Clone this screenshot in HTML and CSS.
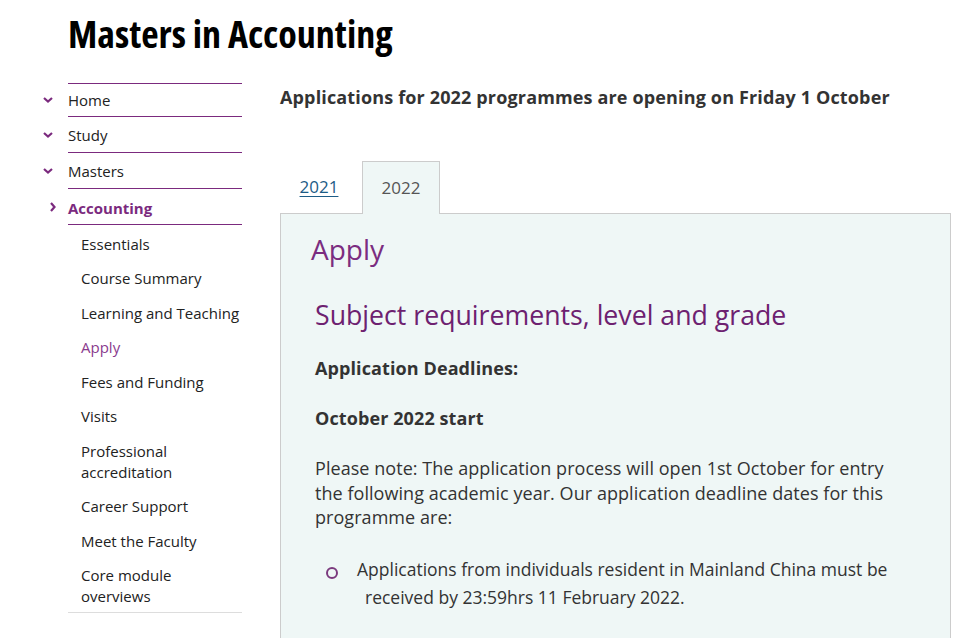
FILE: index.html
```html
<!DOCTYPE html>
<html lang="en">
<head>
<meta charset="utf-8">
<title>Masters in Accounting</title>
<link rel="stylesheet" href="styles.css">
</head>
<body>
<header class="page-head">
  <h1 class="page-title">Masters in Accounting</h1>
</header>
<div class="layout">
  <nav class="sidenav">
    <ul class="crumbs">
      <li class="crumb"><span class="chev chev-down"><svg viewBox="0 0 10 6" width="10" height="6"><path d="M1 1 L5 4.5 L9 1" fill="none" stroke="currentColor" stroke-width="2.2"/></svg></span><a class="crumb-link" href="#">Home</a></li>
      <li class="crumb"><span class="chev chev-down"><svg viewBox="0 0 10 6" width="10" height="6"><path d="M1 1 L5 4.5 L9 1" fill="none" stroke="currentColor" stroke-width="2.2"/></svg></span><a class="crumb-link" href="#">Study</a></li>
      <li class="crumb"><span class="chev chev-down"><svg viewBox="0 0 10 6" width="10" height="6"><path d="M1 1 L5 4.5 L9 1" fill="none" stroke="currentColor" stroke-width="2.2"/></svg></span><a class="crumb-link" href="#">Masters</a></li>
      <li class="crumb crumb-current"><span class="chev chev-right"><svg viewBox="0 0 6 10" width="6" height="10"><path d="M1 1 L4.5 5 L1 9" fill="none" stroke="currentColor" stroke-width="2.2"/></svg></span><a class="crumb-link" href="#">Accounting</a></li>
    </ul>
    <ul class="subnav">
      <li><a class="sub-link" href="#">Essentials</a></li>
      <li><a class="sub-link" href="#">Course Summary</a></li>
      <li><a class="sub-link" href="#">Learning and Teaching</a></li>
      <li><a class="sub-link sub-active" href="#">Apply</a></li>
      <li><a class="sub-link" href="#">Fees and Funding</a></li>
      <li><a class="sub-link" href="#">Visits</a></li>
      <li><a class="sub-link" href="#">Professional accreditation</a></li>
      <li><a class="sub-link" href="#">Career Support</a></li>
      <li><a class="sub-link" href="#">Meet the Faculty</a></li>
      <li><a class="sub-link sub-last" href="#">Core module overviews</a></li>
    </ul>
  </nav>
  <main class="main">
    <p class="notice">Applications for 2022 programmes are opening on Friday 1 October</p>
    <div class="tabs">
      <a class="tab" href="#">2021</a>
      <span class="tab tab-active">2022</span>
    </div>
    <section class="panel">
      <h2 class="panel-title">Apply</h2>
      <div class="panel-body">
        <h3 class="sub-title">Subject requirements, level and grade</h3>
        <p class="strong-line">Application Deadlines:</p>
        <p class="strong-line">October 2022 start</p>
        <p class="para">Please note: The application process will open 1st October for entry the following academic year. Our application deadline dates for this programme are:</p>
        <ul class="bullets">
          <li class="bullet">Applications from individuals resident in Mainland China must be received by 23:59hrs 11 February 2022.</li>
        </ul>
      </div>
    </section>
  </main>
</div>
</body>
</html>
```
FILE: styles.css
```css
* { box-sizing: border-box; }
html, body { margin: 0; padding: 0; background: #fff; }
body {
  font-family: "Open Sans", "DejaVu Sans", sans-serif;
  color: #333;
  width: 965px;
  height: 638px;
  overflow: hidden;
}
a { text-decoration: none; color: inherit; }
ul { list-style: none; margin: 0; padding: 0; }

.page-head { padding: 11px 0 0 68px; height: 83px; }
.page-title {
  margin: 0;
  font-size: 38px;
  line-height: 44px;
  font-weight: 700;
  font-stretch: 75%;
  color: #000;
}

.layout { display: flex; }
.sidenav { width: 242px; padding-left: 40px; flex: none; }
.crumb { display: flex; align-items: center; }
.chev { width: 28px; flex: none; color: #7b2a7e; display: flex; align-items: center; }
.chev-down { padding-left: 3px; }
.chev-right { padding-left: 10px; }
.chev svg { display: block; }
.crumb-link {
  flex: 1;
  font-size: 15px;
  line-height: 22px;
  padding: 6.5px 0 6.5px 0;
  border-bottom: 1px solid #7b2a7e;
  color: #222;
}
.crumbs .crumb:first-child .crumb-link { border-top: 1px solid #7b2a7e; padding-top: 5px; padding-bottom: 5px; }
.crumb-current .crumb-link { font-weight: 700; color: #7b2a7e; padding-top: 7.5px; padding-bottom: 5.5px; }

.subnav { margin-left: 28px; padding-top: 2px; border-bottom: 1px solid #ddd; }
.sub-link {
  display: block;
  font-size: 15px;
  line-height: 21px;
  padding: 6.75px 0 6.75px 13px;
  color: #222;
}
.sub-link.sub-last { padding-bottom: 4.75px; }
.sub-active { color: #8a3a8e; }

.main { margin-left: 38px; width: 671px; flex: none; }
.notice { margin: 0; padding-top: 3px; font-size: 18px; line-height: 22px; font-weight: 700; color: #333; letter-spacing: 0.15px; }

.tabs { display: flex; gap: 4px; margin-top: 52px; }
.tab {
  width: 78px;
  height: 53px;
  display: flex;
  align-items: center;
  justify-content: center;
  font-size: 17px;
  padding-bottom: 2px;
  color: #555;
  border: 1px solid transparent;
  border-bottom: none;
}
a.tab { color: #1d5c86; text-decoration: underline; text-underline-offset: 3px; }
.tab-active { background: #eff7f6; border-color: #ccc; color: #555; position: relative; top: 1px; }

.panel {
  background: #eff7f6;
  border: 1px solid #ccc;
  border-bottom: none;
  height: 430px;
  padding: 15px 0 0 30px;
}
.panel-title { margin: 0; font-size: 28px; line-height: 40px; font-weight: 400; color: #7b2d80; }
.panel-body { padding-left: 4px; padding-right: 48px; }
.sub-title { margin: 28px 0 0 0; font-size: 26.7px; line-height: 36px; font-weight: 400; color: #6d2170; }
.strong-line { margin: 23px 0 0 0; font-size: 18px; line-height: 24px; font-weight: 700; color: #333; letter-spacing: 0.1px; }
.strong-line + .strong-line { margin-top: 26px; }
.para { margin: 26px 0 0 0; font-size: 18px; line-height: 24.5px; color: #333; letter-spacing: 0.05px; }
.bullets { margin-top: 25px; padding-left: 14px; }
.bullet {
  position: relative;
  font-size: 17.5px;
  line-height: 28px;
  padding-left: 28px;
  text-indent: -8px;
  padding-right: 0;
  margin-left: 8px;
}
.bullet::before {
  content: "";
  position: absolute;
  left: -11px;
  top: 12px;
  width: 8px;
  height: 8px;
  border: 2.5px solid #7b3a7e;
  border-radius: 50%;
  text-indent: 0;
}
```
